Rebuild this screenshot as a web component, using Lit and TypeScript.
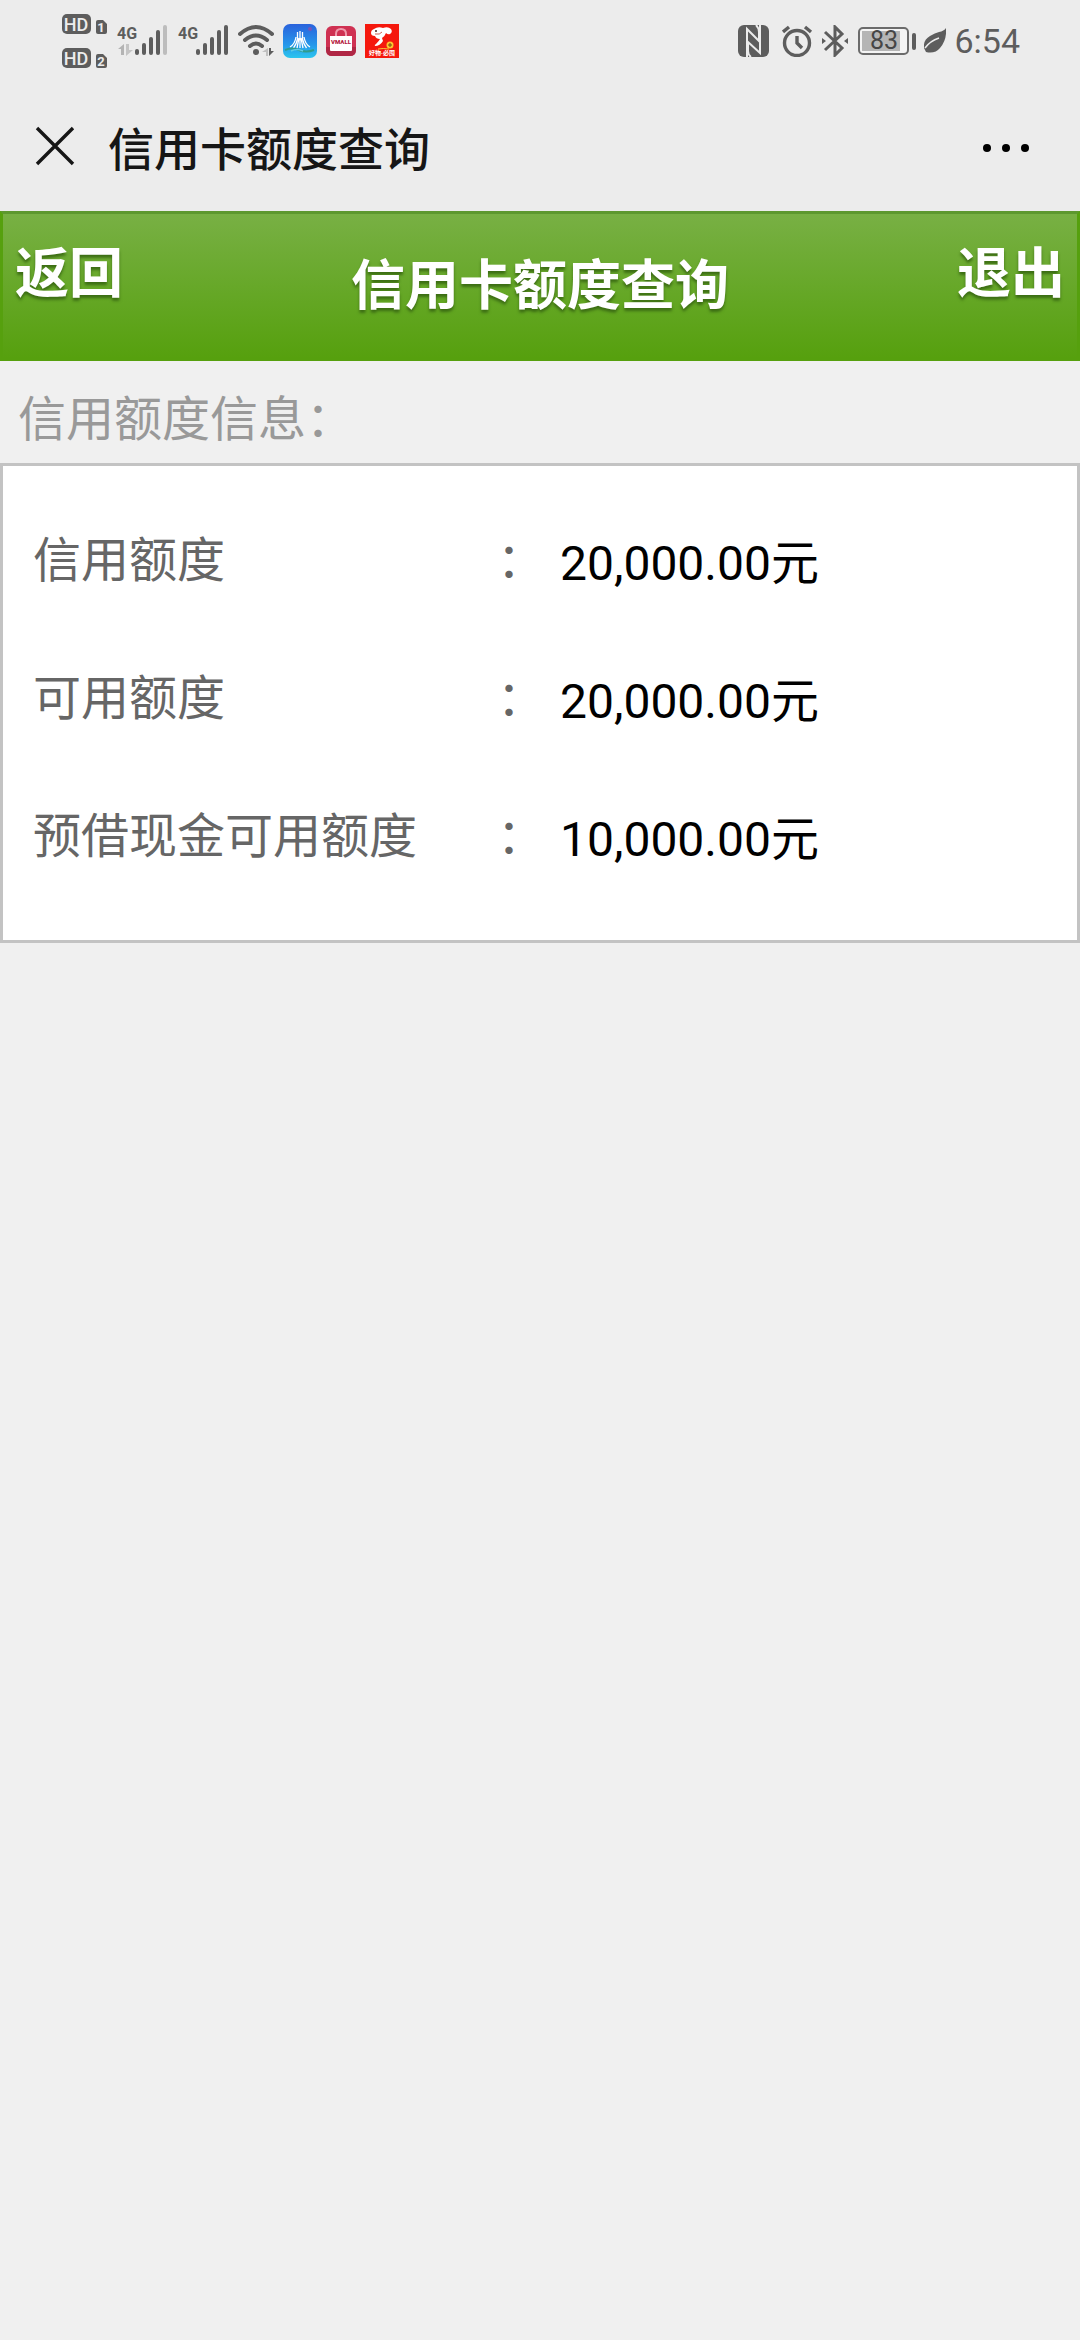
import { LitElement, html, css, svg } from "lit";
import { customElement, property } from "lit/decorators.js";

const INK = "#5d5d5d";

/** Carrier, connectivity and battery indicators along the top edge. */
@customElement("status-bar")
class StatusBar extends LitElement {
  static styles = css`
    :host {
      display: block;
      color: #5d5d5d;
      font-family: Roboto, "Noto Sans CJK SC", sans-serif;
    }
    .bar {
      display: flex;
      justify-content: space-between;
      align-items: center;
      height: 82px;
      padding: 0 60px 0 62px;
    }
    .group {
      display: flex;
      align-items: center;
    }
    .start {
      gap: 9px;
    }
    .end {
      gap: 8px;
    }
    svg {
      display: block;
      flex: none;
    }
    .time {
      font-size: 34px;
      line-height: 40px;
    }
  `;

  private hd(slot: number, y: number) {
    return svg`
      <g transform="translate(0 ${y})">
        <rect width="29" height="20" rx="5" fill="${INK}"></rect>
        <text x="14" y="17" text-anchor="middle" font-size="18" font-weight="500" fill="#ececec">HD</text>
        <path d="M36 6h5l4 4v8q0 2-2 2h-7q-2 0-2-2V8q0-2 2-2z" fill="${INK}"></path>
        <text x="39" y="18" text-anchor="middle" font-size="13" font-weight="700" fill="#ececec">${slot}</text>
      </g>`;
  }

  private bars(active: number) {
    const tops = [26, 20, 14, 7, 2];
    return tops.map((top, i) => {
      const x = 21 + i * 7;
      return svg`<path d="M${x} ${top + 2}V30" stroke="${i < active ? INK : "#bdbdbd"}" stroke-width="4" stroke-linecap="round"></path>`;
    });
  }

  render() {
    return html`
      <div class="bar">
        <div class="group start">
          <svg width="45" height="64" viewBox="0 -5 45 64" role="img" aria-label="HD">
            ${this.hd(1, 0)} ${this.hd(2, 34)}
          </svg>
          <svg width="52" height="36" viewBox="0 0 52 36" role="img" aria-label="4G">
            <text x="1" y="16" font-size="16" font-weight="700" fill=${INK}>4G</text>
            <path d="M8 21v11H5v-6H2z" fill="#b4b4b4"></path>
            <path d="M10 21h3v6h4l-7 6z" fill="#c4c4c4"></path>
            ${this.bars(4)}
          </svg>
          <svg width="52" height="36" viewBox="0 0 52 36" role="img" aria-label="4G">
            <text x="1" y="16" font-size="16" font-weight="700" fill=${INK}>4G</text>
            ${this.bars(5)}
          </svg>
          <svg width="36" height="34" viewBox="0 0 36 34" role="img" aria-label="Wi-Fi">
            <g fill="none" stroke=${INK} stroke-width="4" stroke-linecap="round">
              <path d="M2 10Q18-4 34 10"></path>
              <path d="M7 16Q18 7 29 16"></path>
              <path d="M12 22Q18 17 24 22"></path>
            </g>
            <circle cx="18" cy="28" r="3" fill=${INK}></circle>
            <path d="M30 24v8h-2v-4h-4z" fill="#c0c0c0"></path>
            <path d="M31 24h2v3h3l-5 5z" fill=${INK}></path>
          </svg>
          <svg width="34" height="34" viewBox="0 0 34 34" aria-hidden="true">
            <defs>
              <linearGradient id="sky" x1="0" y1="0" x2="0" y2="1">
                <stop offset="0" stop-color="#2a62dc"></stop>
                <stop offset="0.6" stop-color="#2596ea"></stop>
                <stop offset="1" stop-color="#2cc6ee"></stop>
              </linearGradient>
            </defs>
            <rect width="34" height="34" rx="7" fill="url(#sky)"></rect>
            <path d="M17 7v17M14.5 8v7q-1 5-4 9M19.500 8v7q1 5 4 9M13 13q-1 7-6 10M21 13q1 7 6 10M16 14l-2 10M18 14l2 10" fill="none" stroke="#fff" stroke-width="1.3"></path>
            <path d="M2 26q7-3 14 0t15 0" fill="none" stroke="#2f9c8c" stroke-width="2"></path>
            <path d="M8 27q6-3 12 0" fill="none" stroke="#5ecbe8" stroke-width="1.5"></path>
            <circle cx="27" cy="5" r="2" fill="#7655b8"></circle>
          </svg>
          <svg width="30" height="30" viewBox="0 0 30 30" role="img" aria-label="VMALL">
            <rect width="30" height="30" rx="6" fill="#cf3152"></rect>
            <path d="M0 21h30v3q0 6-6 6H6q-6 0-6-6z" fill="#b02745"></path>
            <path d="M10 12V8q0-5 5-5t5 5v4" fill="none" stroke="#ef9aac" stroke-width="2"></path>
            <path d="M4 10h22v14q0 1-1 1H5q-1 0-1-1z" fill="#fff"></path>
            <text x="15" y="18" text-anchor="middle" font-size="6" font-weight="900" fill="#b5213f">VMALL</text>
          </svg>
          <svg width="34" height="34" viewBox="0 0 34 34" aria-hidden="true">
            <rect width="34" height="34" fill="#f5180d"></rect>
            <path d="M9 5q4-3 9-1 5-2 8 1 2 3-1 5-2 1-4-1-1 3-4 5l1 3q-3 5-8 5-1-1 1-2 3-3 4-5-4 0-5-3-4 0-4-3 0-3 3-4z" fill="#fff"></path>
            <circle cx="11" cy="7" r="1" fill="#43201c"></circle>
            <path d="M10 10q5 1 7-2" fill="none" stroke="#c0392b" stroke-width="0.8"></path>
            <path d="M13 25q5-1 11 0" stroke="#f6c233" stroke-width="1" fill="none"></path>
            <circle cx="25" cy="21" r="3.5" fill="#fbc531"></circle>
            <path d="M25 19v4M23 21h4" stroke="#6d4a12" stroke-width="1"></path>
            <text x="17" y="31" text-anchor="middle" font-size="6" font-weight="700" fill="#fff">好物·必囤</text>
          </svg>
        </div>
        <div class="group end">
          <svg width="36" height="32" viewBox="0 0 36 32" role="img" aria-label="NFC">
            <rect width="31" height="32" rx="6" fill=${INK}></rect>
            <path d="M9 32V4l12 12V7q0-4-3-7M22 0v28L10 17v9q0 4 3 6" fill="none" stroke="#ececec" stroke-width="2"></path>
          </svg>
          <svg width="32" height="32" viewBox="0 0 32 32" role="img" aria-label="闹钟">
            <circle cx="15" cy="18" r="12.5" fill="none" stroke=${INK} stroke-width="3.4"></circle>
            <path d="M15 11v7l5 5M1 7l6-5M23 2l6 5" fill="none" stroke=${INK} stroke-width="3.4"></path>
          </svg>
          <svg width="28" height="32" viewBox="0 0 28 32" role="img" aria-label="蓝牙">
            <path d="M3 7l17 16-7 7V2l7 7L3 25" fill="none" stroke=${INK} stroke-width="3"></path>
            <path d="M0 13l4 3-4 3zM26 13l-4 3 4 3z" fill=${INK}></path>
          </svg>
          <svg width="58" height="28" viewBox="0 0 58 28" role="img" aria-label="电量 83%">
            <rect x="1" y="1" width="49" height="26" rx="4" fill="#f4f4f4" stroke="#6b6b6b" stroke-width="2"></rect>
            <rect x="4" y="4" width="38" height="20" fill="#b5b5b5"></rect>
            <rect x="54" y="6" width="4" height="17" rx="2" fill=${INK}></rect>
            <text x="26" y="22" text-anchor="middle" font-size="25" fill="#464646">83</text>
          </svg>
          <svg width="22" height="26" viewBox="0 0 22 26" role="img" aria-label="省电">
            <path d="M22 0Q23 12 16 20 11 26 2 24L0 20Q-1 12 6 8q5-3 9-4Q20 3 22 0z" fill=${INK}></path>
            <path d="M1 20Q6 13 15 10" fill="none" stroke="#ececec" stroke-width="1.5"></path>
          </svg>
          <span class="time">6:54</span>
        </div>
      </div>
    `;
  }
}

/** One label / value pair of the limit card. */
@customElement("limit-row")
class LimitRow extends LitElement {
  @property() label = "";
  @property() value = "";

  static styles = css`
    :host {
      display: block;
    }
    .row {
      display: grid;
      grid-template-columns: 464fr 550fr;
      margin: 0;
      font-family: "Noto Sans CJK SC", sans-serif;
      font-size: 48px;
      line-height: 72px;
      color: #666;
    }
    .value {
      display: flex;
      gap: 15px;
      margin: 0;
    }
    .amount {
      padding-top: 8px;
      font-family: Roboto, "Noto Sans CJK SC", sans-serif;
      color: #000;
    }
  `;

  render() {
    return html`
      <dl class="row">
        <dt>${this.label}</dt>
        <dd class="value">
          <span>：</span>
          <span class="amount">${this.value}</span>
        </dd>
      </dl>
    `;
  }
}

@customElement("app-root")
class AppRoot extends LitElement {
  static styles = css`
    :host {
      display: block;
      min-height: 100vh;
      background: #f0f0f0;
      font-family: "Noto Sans CJK SC", sans-serif;
    }
    button {
      border: 0;
      padding: 0;
      background: none;
      font: inherit;
      color: inherit;
      text-shadow: inherit;
      cursor: pointer;
    }
    svg {
      display: block;
    }
    .chrome {
      background: #ececec;
    }
    .nav {
      display: flex;
      align-items: center;
      padding: 31px 48px 32px 34px;
      color: #161616;
    }
    .nav-title {
      flex: 1;
      margin: 0 0 0 32px;
      font-size: 46px;
      font-weight: 500;
      line-height: 66px;
    }
    .header {
      display: grid;
      grid-template-columns: 1fr auto 1fr;
      align-items: start;
      padding: 20px 12px 40px;
      border: 3px solid #56a00e;
      border-top-color: #5d982f;
      background: linear-gradient(#78b044, #56a00e);
      color: #fff;
      font-size: 54px;
      font-weight: 700;
      line-height: 72px;
      text-shadow: 0 3px 3px #3c6d14;
    }
    .back {
      justify-self: start;
    }
    .exit {
      justify-self: end;
    }
    .heading {
      margin: 12px 0 0;
      font: inherit;
    }
    .caption {
      margin: 0;
      padding: 18px 18px 12px;
      font-size: 48px;
      font-weight: 400;
      line-height: 72px;
      color: #999;
    }
    .card {
      display: grid;
      gap: 58px;
      padding: 54px 30px 64px;
      border: 3px solid #c3c3c3;
      background: #fff;
    }
  `;

  private rows = [
    { label: "信用额度", value: "20,000.00元" },
    { label: "可用额度", value: "20,000.00元" },
    { label: "预借现金可用额度", value: "10,000.00元" },
  ];

  render() {
    return html`
      <div class="chrome">
        <status-bar></status-bar>
        <nav class="nav">
          <button type="button" aria-label="关闭">
            <svg width="42" height="42" viewBox="0 0 42 42">
              <path d="M3 3l36 36M39 3L3 39" stroke="#161616" stroke-width="3.4"></path>
            </svg>
          </button>
          <p class="nav-title">信用卡额度查询</p>
          <button type="button" aria-label="更多">
            <svg width="50" height="42" viewBox="0 0 50 42">
              <circle cx="5" cy="23" r="4"></circle>
              <circle cx="24" cy="23" r="4"></circle>
              <circle cx="43" cy="23" r="4"></circle>
            </svg>
          </button>
        </nav>
      </div>
      <header class="header">
        <button class="back" type="button">返回</button>
        <h1 class="heading">信用卡额度查询</h1>
        <button class="exit" type="button">退出</button>
      </header>
      <main>
        <h2 class="caption">信用额度信息：</h2>
        <section class="card">
          ${this.rows.map((r) => html`<limit-row .label=${r.label} .value=${r.value}></limit-row>`)}
        </section>
      </main>
    `;
  }
}
